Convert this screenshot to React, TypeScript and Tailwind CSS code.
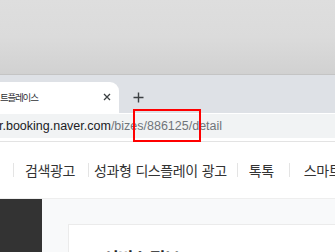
import React from "react";

const kr = { fontFamily: '"Noto Sans CJK KR", "Noto Sans", sans-serif' };
const latin = { fontFamily: '"Liberation Sans", Arial, sans-serif' };

function Divider() {
  return <span className="w-[1px] h-[14px] bg-[#e4e4e4] shrink-0" />;
}

export default function App() {
  return (
    <div className="relative w-[335px] h-[252px] overflow-hidden bg-white">
      {/* desktop backdrop */}
      <div className="h-[74px] bg-gradient-to-b from-[#dedede] via-[#dbdbdb] to-[#d1d1d1]" />
      <div className="h-[1px] bg-[#c4c4c4]" />
      {/* tab strip */}
      <div className="h-[38px] bg-[#dee1e6] flex items-end">
        <div className="w-[119px] h-[31px] bg-white rounded-tr-[9px] flex items-center justify-between pr-[8px]">
          <span style={kr} className="text-[9.5px] tracking-[-1.2px] text-[#303134] leading-none">트플레이스</span>
          <svg width="8" height="8" viewBox="0 0 8 8" className="mb-[1px]">
            <path d="M1 1 L7 7 M7 1 L1 7" stroke="#3c4043" strokeWidth="1.3" />
          </svg>
        </div>
        <div className="h-[31px] flex items-center pl-[14px]">
          <svg width="11" height="11" viewBox="0 0 11 11">
            <path d="M5.5 0.5 V10.5 M0.5 5.5 H10.5" stroke="#3c4043" strokeWidth="1.4" />
          </svg>
        </div>
      </div>
      {/* toolbar */}
      <div className="h-[28px] bg-white pt-[1px]">
        <div className="h-[24px] bg-[#f1f3f4] flex items-center">
          <span style={latin} className="text-[12.5px] leading-none whitespace-nowrap -ml-[1px] mt-[1px]">
            <span className="text-[#202124]">r.booking.naver.com</span>
            <span className="text-[#70757a]">/bizes/886125/detail</span>
          </span>
        </div>
      </div>
      <div className="h-[1px] bg-[#e3e3e3]" />
      {/* nav */}
      <div style={kr} className="h-[56px] bg-white flex items-center whitespace-nowrap text-[14px] tracking-[-0.4px] text-[#333] pl-[13px]">
        <Divider />
        <span className="pl-[11px] pr-[13px]">검색광고</span>
        <Divider />
        <span className="pl-[5px] pr-[10px] flex gap-[4px]">
          <span>성과형</span>
          <span>디스플레이</span>
          <span>광고</span>
        </span>
        <Divider />
        <span className="pl-[11px] pr-[15px]">톡톡</span>
        <Divider />
        <span className="pl-[14px] pr-[12px]">스마트플레이스</span>
      </div>
      {/* content */}
      <div className="flex h-[60px] border-t border-[#eeeeee]">
        <div className="w-[42px] bg-[#333333]" />
        <div className="flex-1 bg-[#f8f9fa] pt-[25px] pl-[26px]">
          <div className="h-full bg-white border-t border-l border-[#ebebeb] pt-[20px] pl-[34px]">
            <span style={kr} className="text-[17px] font-bold text-[#222] tracking-[-1px] whitespace-nowrap">서비스 정보</span>
          </div>
        </div>
      </div>
      {/* highlight box */}
      <div className="absolute left-[133px] top-[109px] w-[68px] h-[33px] border-2 border-[#f00]" />
    </div>
  );
}
